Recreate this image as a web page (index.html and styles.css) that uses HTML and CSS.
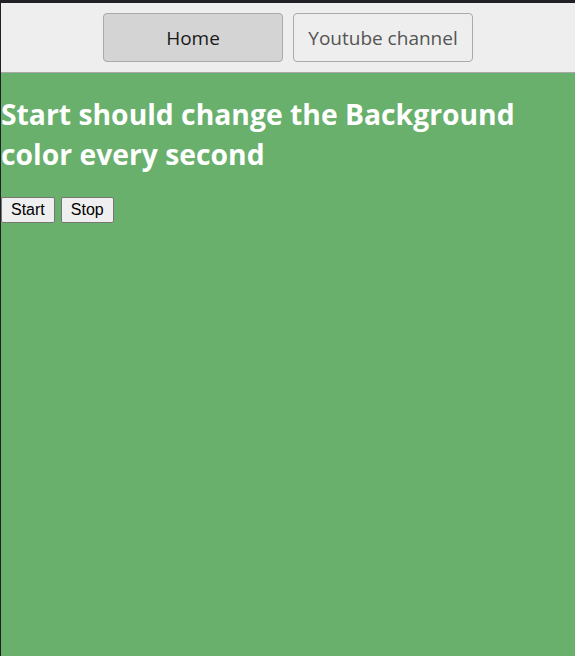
FILE: index.html
```html
<!DOCTYPE html>
<html>
<head>
<meta charset="utf-8">
<link rel="stylesheet" href="styles.css">
</head>
<body>
<nav class="nav">
  <button class="nav-btn active">Home</button>
  <button class="nav-btn">Youtube channel</button>
</nav>
<main class="content">
  <h1 class="title">Start should change the Background color every second</h1>
  <div class="controls">
    <button class="ctl">Start</button>
    <button class="ctl">Stop</button>
  </div>
</main>
</body>
</html>
```
FILE: styles.css
```css
html, body { margin: 0; height: 100%; }
body {
  background: #202124;
  padding-top: 3px;
  padding-left: 1px;
  box-sizing: border-box;
  display: flex;
  flex-direction: column;
}
.nav {
  background: #eeeeee;
  height: 70px;
  flex: none;
  border-bottom: 1px solid #a9a9a9;
  display: flex;
  justify-content: center;
  align-items: flex-start;
  gap: 10px;
  padding-top: 10px;
  box-sizing: border-box;
}
.nav-btn {
  width: 180px;
  height: 49px;
  border: 1px solid #aaaaaa;
  border-radius: 4px;
  background: #eeeeee;
  color: #555555;
  font-family: "Open Sans", sans-serif;
  font-size: 19px;
  padding: 0;
}
.nav-btn.active { background: #d4d4d4; color: #1a1a1a; }
.content {
  flex: 1;
  background: #68b06c;
}
.title {
  font-family: "Open Sans", sans-serif;
  font-weight: 700;
  font-size: 28.3px;
  line-height: 40px;
  color: #ffffff;
  margin: 21px 0 23px 0;
  padding-right: 50px;
}
.controls { display: flex; gap: 6px; }
.ctl {
  font-family: "Liberation Sans", Arial, sans-serif;
  font-size: 16px;
  padding: 2px 9px;
  border: 1px solid #767676;
  border-radius: 2px;
  background: #efefef;
  color: #000;
  height: 26px;
}
```
